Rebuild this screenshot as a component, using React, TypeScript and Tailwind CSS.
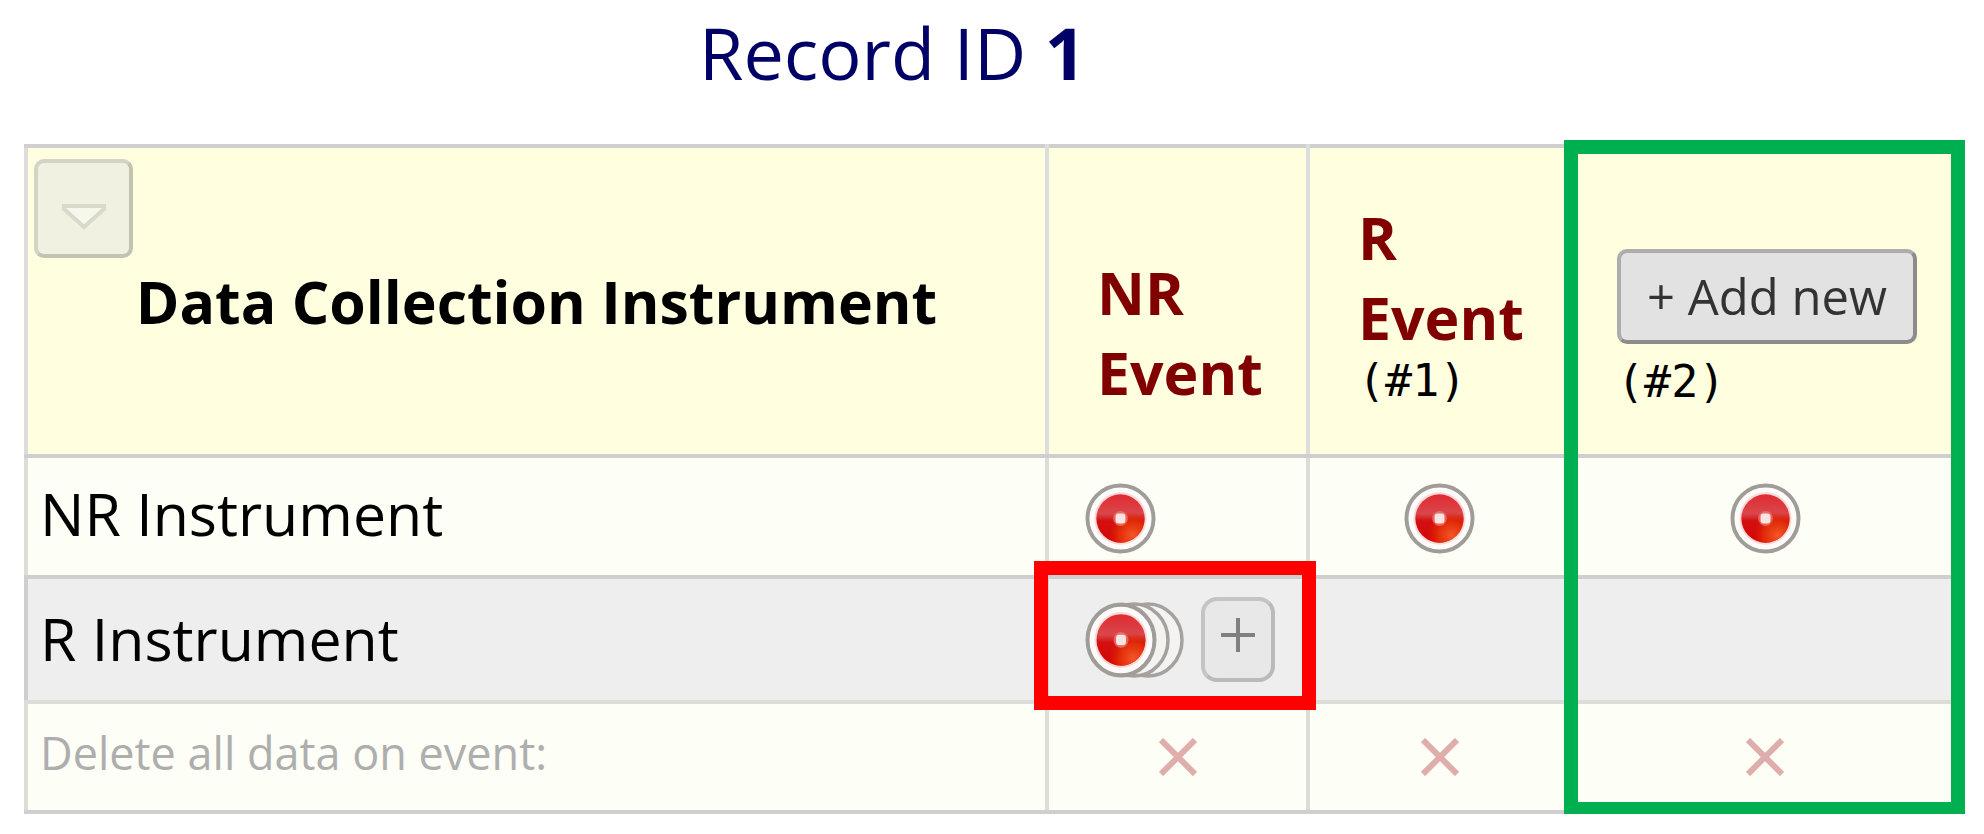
import React from 'react';

function RedBall({ id }: { id: string }) {
  return (
    <>
      <defs>
        <linearGradient id={id} x1="0" y1="0" x2="0" y2="1">
          <stop offset="0" stopColor="#e02a33" />
          <stop offset="0.4" stopColor="#d9474b" />
          <stop offset="0.55" stopColor="#d31010" />
          <stop offset="1" stopColor="#d40505" />
        </linearGradient>
        <radialGradient id={id + '-glow'} cx="0.75" cy="0.85" r="0.5">
          <stop offset="0" stopColor="#f4572c" />
          <stop offset="0.55" stopColor="#e53408" stopOpacity="0.85" />
          <stop offset="1" stopColor="#dd2200" stopOpacity="0" />
        </radialGradient>
      </defs>
      <circle cx="36" cy="36" r="33.5" fill="#fdfcfb" stroke="#a09c98" strokeWidth="4" />
      <circle cx="36" cy="36" r="26.5" fill="#fbd9d6" />
      <circle cx="36" cy="36" r="24.5" fill={`url(#${id})`} />
      <circle cx="36" cy="36" r="24.5" fill={`url(#${id}-glow)`} />
      <circle cx="36" cy="36" r="7.5" fill="#ea7d74" opacity="0.7" />
      <rect x="31" y="31" width="10" height="10" rx="3" fill="#fbe3e1" />
    </>
  );
}

function Status({ id }: { id: string }) {
  return (
    <a href="#form" aria-label="Incomplete" className="inline-block pt-1 align-middle">
      <svg viewBox="0 0 72 72" className="block size-[71px]">
        <RedBall id={id} />
      </svg>
    </a>
  );
}

function StatusStack() {
  return (
    <a href="#instances" aria-label="Incomplete, many instances" className="block">
      <svg viewBox="0 0 99 76" className="block h-[76px] w-[99px]">
        <g fill="#f4f3f2" stroke="#a5a19e" strokeWidth="3.5">
          <ellipse cx="63" cy="38" rx="34" ry="36" />
          <ellipse cx="49" cy="38" rx="34" ry="36" />
        </g>
        <g transform="scale(1 1.055)">
          <RedBall id="stack" />
        </g>
      </svg>
    </a>
  );
}

function DeleteCross() {
  return (
    <button type="button" aria-label="Delete" className="inline-block align-middle">
      <svg viewBox="0 0 38 38" className="block size-[38px]">
        <path d="M2 2L36 36M36 2L2 36" stroke="#dfaeac" strokeWidth="6" />
      </svg>
    </button>
  );
}

const raised = 'border-4 border-t-[#adadad] border-l-[#adadad] border-r-[#8c8c8c] border-b-[#8c8c8c]';

export default function App() {
  return (
    <main className="bg-white pr-[19px] pl-6 pt-7 font-['Open_Sans',sans-serif] text-black">
      <h1 className="h-[116px] pr-[204px] text-center text-[72px] leading-[48px] text-[#000066]">
        Record ID <b>1</b>
      </h1>
      <div className="relative pr-2">
        <table className="w-full table-fixed border-collapse">
          <colgroup>
            <col />
            <col className="w-[261px]" />
            <col className="w-[263px]" />
            <col className="w-[384px]" />
          </colgroup>
          <thead>
            <tr className="h-[310px] bg-[#ffffe0]">
              <th className="relative border-4 border-[#cfcfcf] border-x-[#dddddd] p-0 text-center text-[59px] leading-[80px] font-bold">
                <button
                  type="button"
                  aria-label="Table options"
                  className="absolute top-[11px] left-[6px] grid size-[99px] place-items-center rounded-[10px] border-4 border-[#d3d4c4] border-r-[#c2c3b3] border-b-[#c2c3b3] bg-[#f0f1e0]"
                >
                  <svg viewBox="0 0 46 28" className="mt-4 h-7 w-[46px]">
                    <path d="M3 3H43V6L23 24L3 6Z" fill="#f7f8ec" stroke="#d9dacb" strokeWidth="4" />
                  </svg>
                </button>
                Data Collection Instrument
              </th>
              <th className="border-4 border-[#cfcfcf] border-x-[#dddddd] py-0 pr-0 pl-12 text-left text-[59px] leading-[80px] font-bold text-[#800000]">
                <div className="pt-[62px]">
                  NR
                  <br />
                  Event
                </div>
              </th>
              <th className="border-4 border-[#cfcfcf] border-x-[#dddddd] py-0 pr-0 pl-12 text-left text-[59px] leading-[80px] font-bold text-[#800000]">
                R<br />
                Event
                <div className="font-['DejaVu_Sans_Mono',monospace] text-[45px] leading-[48px] font-normal text-black">
                  (#1)
                </div>
              </th>
              <th className="border-4 border-[#cfcfcf] border-x-[#dddddd] py-0 pr-0 pl-11 text-left font-normal">
                <button
                  type="button"
                  className={`mt-[52px] block h-[95px] w-[300px] rounded-[10px] bg-[#e2e2e2] text-[49px] leading-[80px] whitespace-nowrap text-[#333333] ${raised}`}
                >
                  + Add new
                </button>
                <div className="mt-3.5 font-['DejaVu_Sans_Mono',monospace] text-[45px] leading-[48px]">(#2)</div>
              </th>
            </tr>
          </thead>
          <tbody>
            <tr className="h-[121px] bg-[#fdfef5]">
              <td className="border-4 border-[#cfcfcf] border-x-[#dcddd6] pt-0 pr-0 pb-2 pl-3 text-[59px] leading-[80px]">
                NR Instrument
              </td>
              <td className="border-4 border-[#cfcfcf] border-x-[#dcddd6] py-0 pr-0 pl-9">
                <Status id="nr-event" />
              </td>
              <td className="border-4 border-[#cfcfcf] border-x-[#dcddd6] p-0 text-center">
                <Status id="r-event-1" />
              </td>
              <td className="border-4 border-[#cfcfcf] border-x-[#dcddd6] py-0 pr-0 pl-1 text-center">
                <Status id="r-event-2" />
              </td>
            </tr>
            <tr className="h-[125px] bg-[#eeeeee]">
              <td className="border-4 border-[#cfcfcf] border-b-[#dcddd6] pt-0 pr-0 pb-1 pl-3 text-[59px] leading-[80px]">
                R Instrument
              </td>
              <td className="relative border-4 border-[#cfcfcf] border-b-[#dcddd6] py-0 pr-0 pl-9">
                <div className="flex items-center gap-[17px]">
                  <StatusStack />
                  <button
                    type="button"
                    aria-label="Add new instance"
                    className="grid h-[85px] w-[74px] place-items-center rounded-[16px] border-4 border-[#c4c4c4] border-r-[#bababa] border-b-[#bababa] bg-[#e8e8e8]"
                  >
                    <svg viewBox="0 0 34 34" className="mb-2.5 size-[34px]">
                      <path d="M17 0V34M0 17H34" stroke="#808080" strokeWidth="4" />
                    </svg>
                  </button>
                </div>
                <div className="pointer-events-none absolute -top-[18px] -right-2.5 -bottom-2.5 -left-[15px] border-[14px] border-[#ff0000]" />
              </td>
              <td className="border-4 border-[#cfcfcf] border-x-[#eeeeee] border-b-[#dcddd6]" />
              <td className="border-4 border-[#cfcfcf] border-x-[#eeeeee] border-b-[#dcddd6]" />
            </tr>
            <tr className="h-[110px] bg-[#fdfef5]">
              <td className="border-4 border-[#cfcfcf] border-x-[#dcddd6] pt-0 pr-0 pb-2 pl-3 text-[45px] leading-[64px] text-[#aeaeae]">
                Delete all data on event:
              </td>
              <td className="border-4 border-[#cfcfcf] border-x-[#dcddd6] p-0 text-center">
                <DeleteCross />
              </td>
              <td className="border-4 border-[#cfcfcf] border-x-[#dcddd6] p-0 text-center">
                <DeleteCross />
              </td>
              <td className="border-4 border-[#cfcfcf] border-x-[#dcddd6] py-0 pr-0 pl-1 text-center">
                <DeleteCross />
              </td>
            </tr>
          </tbody>
        </table>
        <div className="pointer-events-none absolute -top-1 right-0 -bottom-0.5 w-[401px] border-[14px] border-[#00b050]" />
      </div>
    </main>
  );
}
